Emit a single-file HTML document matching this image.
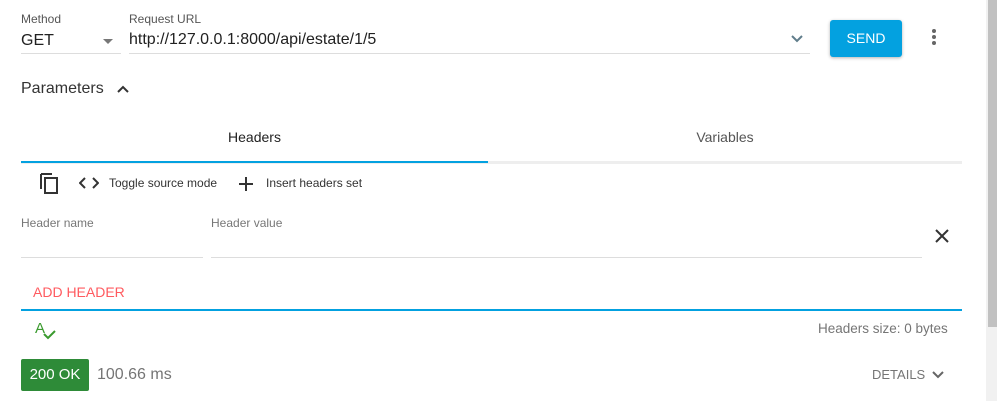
<!DOCTYPE html><html><head><style>
body{margin:0;width:997px;height:401px;background:#fff;font-family:"Liberation Sans",sans-serif;position:relative;overflow:hidden;color:#212121}
.a{position:absolute;white-space:nowrap}
.l{position:absolute;height:1px;background:#ddd}
</style></head><body>
<div class="a" style="left:21px;top:12px;font-size:12px;color:#555">Method</div>
<div class="a" style="left:21px;top:32px;font-size:16px">GET</div>
<div class="a" style="left:103px;top:39px;width:0;height:0;border-left:5px solid transparent;border-right:5px solid transparent;border-top:5px solid #777"></div>
<div class="l" style="left:21px;top:53px;width:100px"></div>
<div class="a" style="left:129px;top:12px;font-size:12px;color:#555">Request URL</div>
<div class="a" style="left:129px;top:31px;font-size:16px">http://127.0.0.1:8000/api/estate/1/5</div>
<div class="l" style="left:129px;top:53px;width:681px"></div>
<svg class="a" style="left:790px;top:34px" width="14" height="10"><path d="M2 2l5 5 5-5" stroke="#607d8b" stroke-width="2" fill="none"/></svg>
<div class="a" style="left:830px;top:20px;width:72px;height:37px;background:#03a1e0;border-radius:3px;box-shadow:0 1px 3px rgba(0,0,0,.3);color:#fff;font-size:14px;text-align:center;line-height:37px">SEND</div>
<div class="a" style="left:932px;top:29px;width:4px;height:4px;border-radius:2px;background:#666;box-shadow:0 6px 0 #666,0 12px 0 #666"></div>
<div class="a" style="left:21px;top:80px;font-size:16px;color:#333">Parameters</div>
<svg class="a" style="left:116px;top:84px" width="14" height="10"><path d="M2 8l5-5 5 5" stroke="#333" stroke-width="2" fill="none"/></svg>
<div class="a" style="left:21px;top:129px;width:467px;text-align:center;font-size:14px;color:#222">Headers</div>
<div class="a" style="left:488px;top:129px;width:474px;text-align:center;font-size:14px;color:#555">Variables</div>
<div class="a" style="left:21px;top:161px;width:941px;height:3px;background:#eee"></div>
<div class="a" style="left:21px;top:161px;width:467px;height:2px;background:#03a1e0"></div>
<svg class="a" style="left:38px;top:172px" width="22" height="24"><path d="M3 2h11M3 2v15" stroke="#333" stroke-width="2" fill="none"/><rect x="7" y="6" width="12" height="15" stroke="#333" stroke-width="2" fill="none"/></svg>
<svg class="a" style="left:79px;top:177px" width="20" height="12"><path d="M6 1l-5 5 5 5M14 1l5 5-5 5" stroke="#333" stroke-width="2" fill="none"/></svg>
<div class="a" style="left:109px;top:176px;font-size:12px;color:#333">Toggle source mode</div>
<svg class="a" style="left:238px;top:176px" width="16" height="16"><path d="M8 1v14M1 8h14" stroke="#333" stroke-width="2"/></svg>
<div class="a" style="left:266px;top:176px;font-size:12px;color:#333">Insert headers set</div>
<div class="a" style="left:21px;top:216px;font-size:12px;color:#777">Header name</div>
<div class="l" style="left:21px;top:257px;width:182px"></div>
<div class="a" style="left:211px;top:216px;font-size:12px;color:#777">Header value</div>
<div class="l" style="left:211px;top:257px;width:711px"></div>
<svg class="a" style="left:934px;top:228px" width="16" height="16"><path d="M2 2l12 12M14 2L2 14" stroke="#333" stroke-width="2"/></svg>
<div class="a" style="left:33px;top:284px;font-size:14px;color:#ff5a5f">ADD HEADER</div>
<div class="a" style="left:21px;top:309px;width:941px;height:2px;background:#03a1e0"></div>
<div class="a" style="left:35px;top:320px;font-size:15px;color:#3a9a2e">A</div>
<svg class="a" style="left:42px;top:328px" width="16" height="14"><path d="M2 6l4 4 7-7" stroke="#3a9a2e" stroke-width="2" fill="none"/></svg>
<div class="a" style="left:818px;top:321px;font-size:13.5px;color:#757575">Headers size: 0 bytes</div>
<div class="a" style="left:21px;top:359px;width:68px;height:32px;background:#2e8b38;border-radius:2px;color:#fff;font-size:15px;line-height:32px;text-align:center">200 OK</div>
<div class="a" style="left:97px;top:366px;font-size:16px;color:#757575">100.66 ms</div>
<div class="a" style="left:872px;top:367px;font-size:13px;color:#757575">DETAILS</div>
<svg class="a" style="left:931px;top:370px" width="14" height="10"><path d="M2 2l5 5 5-5" stroke="#666" stroke-width="2" fill="none"/></svg>
<div class="a" style="left:986px;top:0;width:11px;height:401px;background:#f1f1f1"></div>
<div class="a" style="left:988px;top:0;width:9px;height:327px;background:#c1c1c1"></div>
</body></html>
